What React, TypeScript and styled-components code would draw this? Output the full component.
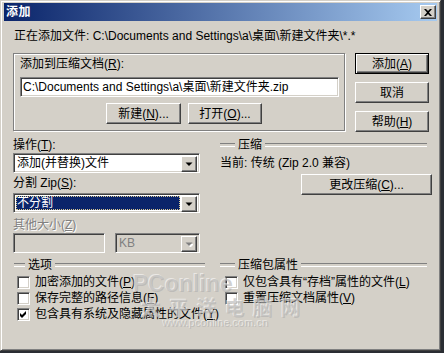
import React from "react";
import styled, { createGlobalStyle, css } from "styled-components";

const FONT = `"Liberation Sans", "Noto Sans CJK SC", sans-serif`;

const GlobalStyle = createGlobalStyle`
  html, body { margin: 0; padding: 0; background: #2a2d33; }
  body { width: 444px; height: 353px; overflow: hidden; font-family: ${FONT}; font-size: 12px; }
  * { box-sizing: border-box; }
`;

const raised = css`
  background: #d4d0c8;
  border: 1px solid;
  border-color: #ffffff #404040 #404040 #ffffff;
  box-shadow: inset -1px -1px #808080;
`;

const sunken = css`
  border: 1px solid;
  border-color: #808080 #ffffff #ffffff #808080;
  box-shadow: inset 1px 1px #404040, inset -1px -1px #d4d0c8;
`;

const Window = styled.div`
  position: relative;
  width: 441px;
  height: 351px;
  background: #d4d0c8;
  border: 1px solid;
  border-color: #d4d0c8 #404040 #404040 #d4d0c8;
  box-shadow: inset 1px 1px #ffffff, inset -1px -1px #808080;
  padding: 2px 3px 3px 3px;
  display: flex;
  flex-direction: column;
  color: #000;
  line-height: 14px;
`;

const TitleBar = styled.div`
  height: 18px;
  flex: none;
  display: flex;
  align-items: center;
  justify-content: space-between;
  padding: 0 1px 0 2px;
  background: linear-gradient(to right, #0a246a, #a6caf0);
`;

const TitleText = styled.span`
  color: #fff;
  font-weight: bold;
  font-size: 12px;
  letter-spacing: 0.5px;
`;

const CloseButton = styled.div`
  ${raised};
  width: 16px;
  height: 14px;
  display: flex;
  align-items: center;
  justify-content: center;
`;

const Content = styled.div`
  display: flex;
  flex-direction: column;
  padding-left: 9px;
`;

const InfoLine = styled.div`
  margin-top: 8px;
  padding-left: 1px;
  white-space: nowrap;
`;

const TopSection = styled.div`
  margin-top: 10px;
  display: flex;
  gap: 10px;
`;

const GroupBox = styled.div`
  width: 332px;
  height: 78px;
  border: 1px solid #808080;
  box-shadow: inset 1px 1px #fff, 1px 1px #fff;
  padding: 3px 5px 0 6px;
  display: flex;
  flex-direction: column;
`;

const TextField = styled.div<{ $disabled?: boolean; $width?: number }>`
  ${sunken};
  height: 20px;
  width: ${(p) => (p.$width ? `${p.$width}px` : "auto")};
  background: ${(p) => (p.$disabled ? "#d4d0c8" : "#fff")};
  padding: 2px 3px 0 2px;
  white-space: nowrap;
  overflow: hidden;
  line-height: 15px;
`;

const PathField = styled(TextField)`
  margin-top: 6px;
`;

const ButtonRow = styled.div`
  margin-top: 6px;
  padding-left: 86px;
  display: flex;
  gap: 7px;
`;

const Button = styled.div<{ $width: number; $default?: boolean }>`
  ${raised};
  width: ${(p) => p.$width}px;
  height: 21px;
  display: flex;
  align-items: center;
  justify-content: center;
  white-space: nowrap;
  ${(p) =>
    p.$default &&
    css`
      border-color: #000;
      box-shadow: inset 1px 1px #fff, inset -1px -1px #404040, inset -2px -2px #808080;
    `}
`;

const ButtonColumn = styled.div`
  display: flex;
  flex-direction: column;
  gap: 8px;
`;

const LowerSection = styled.div`
  margin-top: 6px;
  display: flex;
  gap: 20px;
`;

const LeftColumn = styled.div`
  width: 187px;
  display: flex;
  flex-direction: column;
`;

const FieldLabel = styled.div<{ $gap: number; $disabled?: boolean }>`
  margin-top: ${(p) => p.$gap}px;
  white-space: nowrap;
  ${(p) =>
    p.$disabled &&
    css`
      color: #808080;
      text-shadow: 1px 1px #fff;
    `}
`;

const Combo = styled.div<{ $gap: number; $disabled?: boolean; $width?: number }>`
  ${sunken};
  margin-top: ${(p) => p.$gap}px;
  height: 20px;
  width: ${(p) => (p.$width ? `${p.$width}px` : "auto")};
  padding: 2px;
  display: flex;
  background: ${(p) => (p.$disabled ? "#d4d0c8" : "#fff")};
`;

const ComboValue = styled.div<{ $selected?: boolean; $disabled?: boolean }>`
  flex: 1;
  margin-right: 1px;
  padding-left: 1px;
  line-height: 15px;
  white-space: nowrap;
  color: ${(p) => (p.$disabled ? "#808080" : p.$selected ? "#fff" : "#000")};
  ${(p) =>
    p.$selected &&
    css`
      background: #0a246a;
      outline: 1px dotted #d8c890;
      outline-offset: -1px;
    `}
`;

const ArrowButton = styled.div`
  ${raised};
  width: 16px;
  height: 16px;
  display: flex;
  align-items: center;
  justify-content: center;
`;

const FieldRow = styled.div`
  margin-top: 1px;
  display: flex;
  gap: 10px;
`;

const RightColumn = styled.div`
  width: 212px;
  display: flex;
  flex-direction: column;
`;

const HeadingRow = styled.div<{ $lead: number; $trail?: number }>`
  display: flex;
  align-items: center;
  gap: 3px;
  margin-right: ${(p) => p.$trail ?? 0}px;
  white-space: nowrap;
  &::before,
  &::after {
    content: "";
    height: 2px;
    border-top: 1px solid #808080;
    border-bottom: 1px solid #fff;
  }
  &::before {
    width: ${(p) => p.$lead}px;
  }
  &::after {
    flex: 1;
  }
`;

const CurrentLine = styled.div`
  margin-top: 4px;
  white-space: nowrap;
`;

const ChangeButton = styled(Button)`
  margin-top: 4px;
  align-self: flex-end;
`;

const OptionsSection = styled.div`
  margin-top: 5px;
  display: flex;
  gap: 15px;
  padding-left: 1px;
`;

const OptionsColumn = styled.div<{ $width: number }>`
  width: ${(p) => p.$width}px;
  display: flex;
  flex-direction: column;
`;

const CheckRow = styled.div<{ $indent: number; $first?: boolean }>`
  height: 16px;
  margin-top: ${(p) => (p.$first ? 4 : 0)}px;
  padding-left: ${(p) => p.$indent}px;
  display: flex;
  align-items: flex-start;
  gap: 5px;
  white-space: nowrap;
`;

const CheckBox = styled.div`
  ${sunken};
  flex: none;
  width: 13px;
  height: 13px;
  background: #fff;
  display: flex;
  align-items: center;
  justify-content: center;
`;

const CheckLabel = styled.span`
  line-height: 13px;
`;

const U = styled.span`
  text-decoration: underline;
  text-underline-offset: 1px;
`;

const Watermark = styled.div`
  position: absolute;
  left: 132px;
  top: 270px;
  pointer-events: none;
  display: flex;
  flex-direction: column;
  color: rgba(170, 170, 170, 0.55);
  text-shadow: -1px -1px 0 rgba(255, 255, 255, 0.55);
`;

const WatermarkBrand = styled.span`
  font-family: "Liberation Sans", sans-serif;
  font-weight: bold;
  font-size: 23px;
  line-height: 26px;
`;

const WatermarkName = styled.span`
  margin-left: 8px;
  font-family: "Noto Sans CJK SC", sans-serif;
  font-size: 20px;
  line-height: 22px;
  letter-spacing: 8px;
  font-weight: bold;
`;

const WatermarkUrl = styled.span`
  margin-left: 30px;
  margin-top: -2px;
  font-family: "Liberation Sans", sans-serif;
  font-size: 11px;
  line-height: 12px;
`;

const Arrow = ({ disabled }: { disabled?: boolean }) => (
  <svg width="8" height="5" viewBox="0 0 8 5">
    {disabled && <path d="M2 2h7L5.5 5.5z" fill="#fff" />}
    <path d="M0.5 0.5h7L4 4z" fill={disabled ? "#808080" : "#000"} />
  </svg>
);

const Check = () => (
  <svg width="7" height="7" viewBox="0 0 7 7">
    <polygon points="0,2 2,4 6,0 6,3 2,7 0,5" fill="#000" />
  </svg>
);

const CloseGlyph = () => (
  <svg width="8" height="7" viewBox="0 0 8 7">
    <polygon points="0,0 2,0 4,2 6,0 8,0 5,3.5 8,7 6,7 4,5 2,7 0,7 3,3.5" fill="#000" />
  </svg>
);

export default function App() {
  return (
    <>
      <GlobalStyle />
      <Window>
        <TitleBar>
          <TitleText>添加</TitleText>
          <CloseButton>
            <CloseGlyph />
          </CloseButton>
        </TitleBar>
        <Content>
          <InfoLine>正在添加文件: C:\Documents and Settings\a\桌面\新建文件夹\*.*</InfoLine>
          <TopSection>
            <GroupBox>
              <div>
                添加到压缩文档(<U>R</U>):
              </div>
              <PathField>C:\Documents and Settings\a\桌面\新建文件夹.zip</PathField>
              <ButtonRow>
                <Button $width={75}>
                  新建(<U>N</U>)...
                </Button>
                <Button $width={74}>
                  打开(<U>O</U>)...
                </Button>
              </ButtonRow>
            </GroupBox>
            <ButtonColumn>
              <Button $width={74} $default>
                添加(<U>A</U>)
              </Button>
              <Button $width={74}>取消</Button>
              <Button $width={74}>
                帮助(<U>H</U>)
              </Button>
            </ButtonColumn>
          </TopSection>

          <LowerSection>
            <LeftColumn>
              <FieldLabel $gap={0}>
                操作(<U>T</U>):
              </FieldLabel>
              <Combo $gap={1}>
                <ComboValue>添加(并替换)文件</ComboValue>
                <ArrowButton>
                  <Arrow />
                </ArrowButton>
              </Combo>
              <FieldLabel $gap={3}>
                分割 Zip(<U>S</U>):
              </FieldLabel>
              <Combo $gap={3}>
                <ComboValue $selected>不分割</ComboValue>
                <ArrowButton>
                  <Arrow />
                </ArrowButton>
              </Combo>
              <FieldLabel $gap={5} $disabled>
                其他大小(<U>Z</U>)
              </FieldLabel>
              <FieldRow>
                <TextField $disabled $width={92} />
                <Combo $gap={0} $disabled $width={85}>
                  <ComboValue $disabled>KB</ComboValue>
                  <ArrowButton>
                    <Arrow disabled />
                  </ArrowButton>
                </Combo>
              </FieldRow>
            </LeftColumn>
            <RightColumn>
              <HeadingRow $lead={15} $trail={5}>
                压缩
              </HeadingRow>
              <CurrentLine>当前: 传统 (Zip 2.0 兼容)</CurrentLine>
              <ChangeButton $width={131}>
                更改压缩(<U>C</U>)...
              </ChangeButton>
            </RightColumn>
          </LowerSection>

          <OptionsSection>
            <OptionsColumn $width={191}>
              <HeadingRow $lead={11}>选项</HeadingRow>
              <CheckRow $indent={3} $first>
                <CheckBox />
                <CheckLabel>
                  加密添加的文件(<U>P</U>)
                </CheckLabel>
              </CheckRow>
              <CheckRow $indent={3}>
                <CheckBox />
                <CheckLabel>
                  保存完整的路径信息(<U>F</U>)
                </CheckLabel>
              </CheckRow>
              <CheckRow $indent={3}>
                <CheckBox>
                  <Check />
                </CheckBox>
                <CheckLabel>
                  包含具有系统及隐藏属性的文件(<U>Y</U>)
                </CheckLabel>
              </CheckRow>
            </OptionsColumn>
            <OptionsColumn $width={207}>
              <HeadingRow $lead={15}>压缩包属性</HeadingRow>
              <CheckRow $indent={5} $first>
                <CheckBox />
                <CheckLabel>
                  仅包含具有“存档”属性的文件(<U>L</U>)
                </CheckLabel>
              </CheckRow>
              <CheckRow $indent={5}>
                <CheckBox />
                <CheckLabel>
                  重置压缩文档属性(<U>V</U>)
                </CheckLabel>
              </CheckRow>
            </OptionsColumn>
          </OptionsSection>
        </Content>
        <Watermark>
          <WatermarkBrand>PConline</WatermarkBrand>
          <WatermarkName>太平洋电脑网</WatermarkName>
          <WatermarkUrl>www.pconline.com.cn</WatermarkUrl>
        </Watermark>
      </Window>
    </>
  );
}
